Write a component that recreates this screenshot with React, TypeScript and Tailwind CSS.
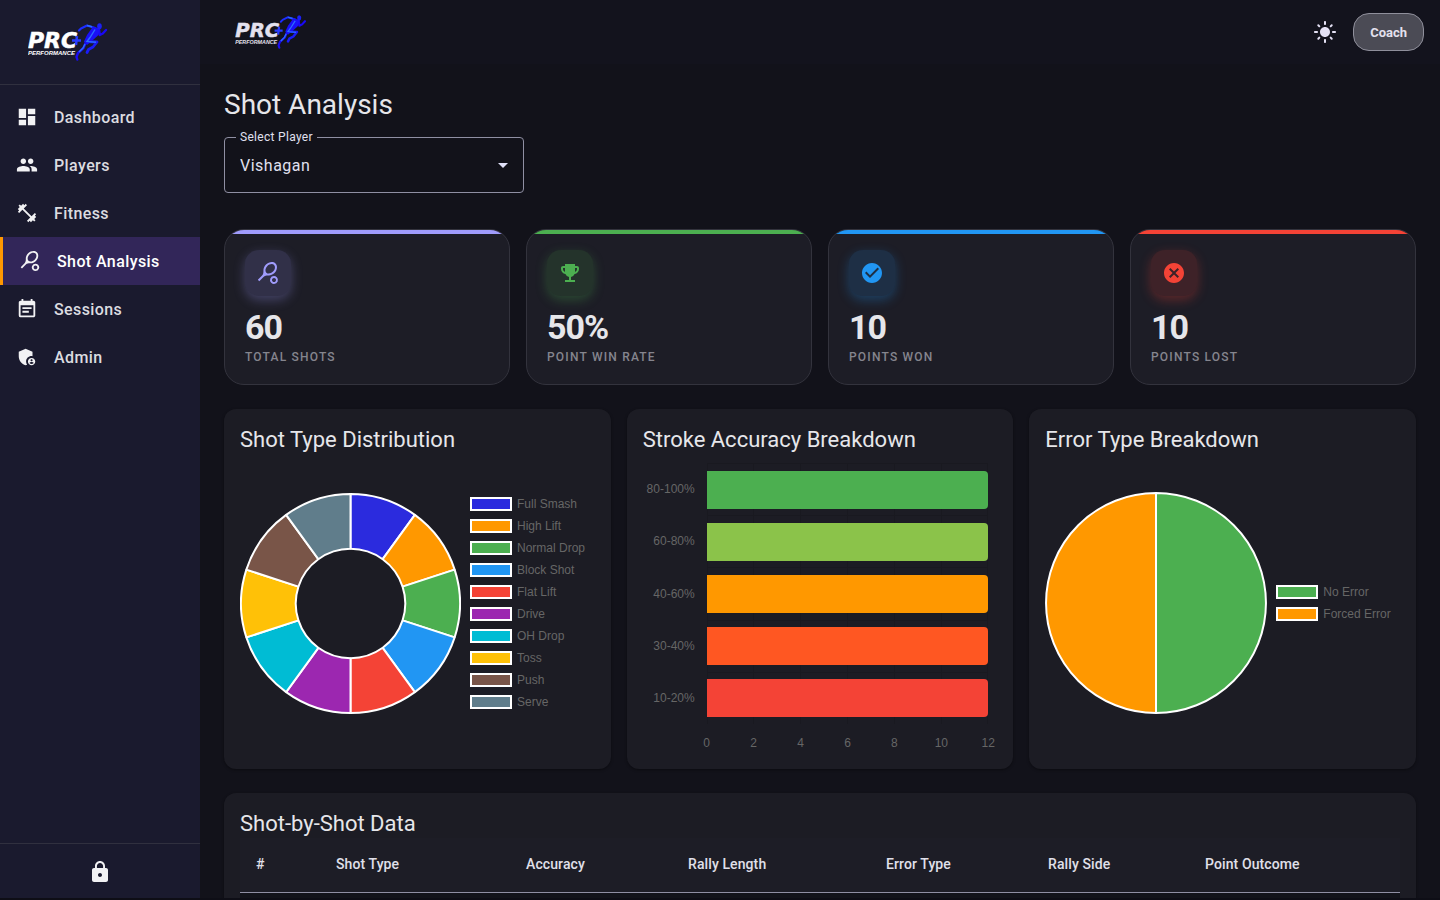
import React, { useState } from 'react';
import type { IconType } from 'react-icons';
import {
  MdAdminPanelSettings,
  MdArrowDropDown,
  MdCancel,
  MdCheckCircle,
  MdDashboard,
  MdEmojiEvents,
  MdEventNote,
  MdFitnessCenter,
  MdLightMode,
  MdLock,
  MdPeople,
  MdSportsTennis,
} from 'react-icons/md';

interface NavItem {
  label: string;
  icon: IconType;
}

interface Slice {
  label: string;
  value: number;
  color: string;
}

const navItems: NavItem[] = [
  { label: 'Dashboard', icon: MdDashboard },
  { label: 'Players', icon: MdPeople },
  { label: 'Fitness', icon: MdFitnessCenter },
  { label: 'Shot Analysis', icon: MdSportsTennis },
  { label: 'Sessions', icon: MdEventNote },
  { label: 'Admin', icon: MdAdminPanelSettings },
];

const stats = [
  {
    value: '60',
    label: 'Total Shots',
    icon: MdSportsTennis,
    bar: 'bg-[#a09cfc]',
    chip: 'bg-[#313048] text-[#a09cfc] shadow-[0_4px_12px_rgba(160,156,252,0.3)]',
  },
  {
    value: '50%',
    label: 'Point Win Rate',
    icon: MdEmojiEvents,
    bar: 'bg-[#4caf50]',
    chip: 'bg-[#24332b] text-[#4caf50] shadow-[0_4px_12px_rgba(76,175,80,0.3)]',
  },
  {
    value: '10',
    label: 'Points Won',
    icon: MdCheckCircle,
    bar: 'bg-[#2196f3]',
    chip: 'bg-[#1e2f45] text-[#2196f3] shadow-[0_4px_12px_rgba(33,150,243,0.3)]',
  },
  {
    value: '10',
    label: 'Points Lost',
    icon: MdCancel,
    bar: 'bg-[#f44336]',
    chip: 'bg-[#3e2228] text-[#f44336] shadow-[0_4px_12px_rgba(244,67,54,0.3)]',
  },
];

const shotTypes: Slice[] = [
  { label: 'Full Smash', value: 6, color: '#2b2bde' },
  { label: 'High Lift', value: 6, color: '#ff9800' },
  { label: 'Normal Drop', value: 6, color: '#4caf50' },
  { label: 'Block Shot', value: 6, color: '#2196f3' },
  { label: 'Flat Lift', value: 6, color: '#f44336' },
  { label: 'Drive', value: 6, color: '#9c27b0' },
  { label: 'OH Drop', value: 6, color: '#00bcd4' },
  { label: 'Toss', value: 6, color: '#ffc107' },
  { label: 'Push', value: 6, color: '#795548' },
  { label: 'Serve', value: 6, color: '#607d8b' },
];

const errorTypes: Slice[] = [
  { label: 'No Error', value: 30, color: '#4caf50' },
  { label: 'Forced Error', value: 30, color: '#ff9800' },
];

const accuracy: Slice[] = [
  { label: '80-100%', value: 12, color: '#4caf50' },
  { label: '60-80%', value: 12, color: '#8bc34a' },
  { label: '40-60%', value: 12, color: '#ff9800' },
  { label: '30-40%', value: 12, color: '#ff5722' },
  { label: '10-20%', value: 12, color: '#f44336' },
];

const ticks = [0, 2, 4, 6, 8, 10, 12];

const columns = [
  { label: '#', width: 'w-[80px]' },
  { label: 'Shot Type', width: 'w-[190px]' },
  { label: 'Accuracy', width: 'w-[162px]' },
  { label: 'Rally Length', width: 'w-[198px]' },
  { label: 'Error Type', width: 'w-[162px]' },
  { label: 'Rally Side', width: 'w-[157px]' },
  { label: 'Point Outcome', width: 'w-[211px]' },
];

const Logo: React.FC<{ className: string }> = ({ className }) => (
  <svg className={className} viewBox="0 0 80 38" role="img" aria-label="PRC+ Performance">
    <text fontWeight="700" fontStyle="italic" fill="currentColor">
      <tspan
        x="0"
        y="25"
        fontSize="22"
        stroke="currentColor"
        strokeWidth="0.5"
        className="font-['DejaVu_Sans',sans-serif]"
      >
        PRC
      </tspan>
      <tspan x="0" y="32" fontSize="6" className="font-['Liberation_Sans',Arial,sans-serif]">
        PERFORMANCE
      </tspan>
    </text>
    {/* plus */}
    <path d="M44 17.500h9M49 13l-1 9" stroke="#2a3cff" strokeWidth="2.500" fill="none" />
    {/* runner */}
    <g fill="none" strokeLinecap="round" strokeLinejoin="round">
      <path d="M67 5l-8-2.500-6 3-2 2" stroke="#1c2cff" strokeWidth="2.200" />
      <path d="M71 6.500l.8 5.500 3-1.500 3.200-3.500" stroke="#1a08f5" strokeWidth="2.400" />
      <path d="M58 18.500l11 .5-4 5-4.500 2.500-1.500 3" stroke="#1a1cf8" strokeWidth="2.800" />
      <path d="M58 19l-2.500 6-5.500 5-1.500 4 .8 2.500" stroke="#1a0cf2" strokeWidth="2.400" />
    </g>
    <path d="M65 3.500l7 2-1.500 6.500-5.500 5-6 5-3-3.500 3-6.500z" fill="#1a10f6" />
    <path
      d="M67 6.500l-5 8-3 4 9 .8M57 21l-2 4-4 4M64 3.800l-5-1.300"
      stroke="#2b6dff"
      strokeWidth="1.400"
      fill="none"
    />
    <ellipse cx="71.500" cy="3.200" rx="2.300" ry="3" fill="#1b20f5" />
  </svg>
);

const Legend: React.FC<{ items: Slice[] }> = ({ items }) => (
  <ul className="flex flex-col gap-2">
    {items.map((item) => (
      <li key={item.label} className="flex items-center gap-[5px] h-[14px]">
        <span
          className="w-[42px] h-[14px] border-2 border-white"
          style={{ backgroundColor: item.color }}
        />
        <span className="text-xs leading-[14px] text-[#666666] whitespace-nowrap font-['Liberation_Sans',Arial,sans-serif]">
          {item.label}
        </span>
      </li>
    ))}
  </ul>
);

const RADIUS = 110;

const slicePath = (start: number, end: number, inner: number) => {
  const point = (r: number, t: number) => {
    const a = t * Math.PI * 2 - Math.PI / 2;
    return `${(r * Math.cos(a)).toFixed(2)} ${(r * Math.sin(a)).toFixed(2)}`;
  };
  const large = end - start > 0.5 ? 1 : 0;
  if (inner === 0) {
    return `M0 0L${point(RADIUS, start)}A${RADIUS} ${RADIUS} 0 ${large} 1 ${point(RADIUS, end)}Z`;
  }
  return [
    `M${point(RADIUS, start)}`,
    `A${RADIUS} ${RADIUS} 0 ${large} 1 ${point(RADIUS, end)}`,
    `L${point(inner, end)}`,
    `A${inner} ${inner} 0 ${large} 0 ${point(inner, start)}Z`,
  ].join('');
};

interface RoundChartProps {
  items: Slice[];
  inner: number;
  title: string;
  size: string;
}

const RoundChart: React.FC<RoundChartProps> = ({ items, inner, title, size }) => {
  const total = items.reduce((sum, item) => sum + item.value, 0);
  let offset = 0;

  return (
    <div className="flex items-center gap-[9px] h-[298px] mb-px">
      <svg
        className={`${size} shrink-0`}
        viewBox="-111 -111 222 222"
        role="img"
        aria-label={title}
      >
        {items.map((item) => {
          const start = offset / total;
          offset += item.value;
          return (
            <path
              key={item.label}
              d={slicePath(start, offset / total, inner)}
              fill={item.color}
              stroke="#ffffff"
              strokeWidth="2"
              strokeLinejoin="bevel"
            />
          );
        })}
      </svg>
      <Legend items={items} />
    </div>
  );
};

const BarChart: React.FC = () => (
  <div className="flex flex-col h-[299px] pt-[9px] pr-[9px] text-xs text-[#666666] font-['Liberation_Sans',Arial,sans-serif]">
    <div className="flex h-[261px]">
      <div className="flex flex-col w-[52px] text-right">
        {accuracy.map((row) => (
          <div key={row.label} className="flex-1 flex items-center justify-end whitespace-nowrap">
            {row.label}
          </div>
        ))}
      </div>
      <div className="relative flex-1 flex flex-col ml-3">
        {/* grid lines */}
        <div className="absolute inset-0 grid grid-cols-6 border-r border-[#191920]">
          {ticks.slice(1).map((tick) => (
            <div key={tick} className="border-l border-[#191920]" />
          ))}
        </div>
        {accuracy.map((row) => (
          <div key={row.label} className="relative flex-1 flex items-center border-t border-[#191920]">
            <div
              className="h-[38px] rounded-r"
              style={{ width: `${(row.value / 12) * 100}%`, backgroundColor: row.color }}
            />
          </div>
        ))}
      </div>
    </div>
    <div className="flex justify-between ml-16 pt-[11px]">
      {ticks.map((tick) => (
        <span key={tick} className="w-0 flex justify-center leading-4">
          {tick}
        </span>
      ))}
    </div>
  </div>
);

const Panel: React.FC<{ title: string; children: React.ReactNode }> = ({ title, children }) => (
  <section className="min-w-0 px-4 pt-[17px] pb-4 rounded-xl bg-[#1c1c24] shadow-[0_1px_3px_rgba(0,0,0,0.4)]">
    <h2 className="text-[22px] leading-7">{title}</h2>
    {children}
  </section>
);

const Sidebar: React.FC<{ active: string; onSelect: (label: string) => void }> = ({
  active,
  onSelect,
}) => (
  <aside className="w-[200px] shrink-0 flex flex-col bg-[#1a1a2e]">
    <div className="h-[85px] pl-7 flex items-center border-b border-[#30303f]">
      <Logo className="w-20 h-[38px] text-white" />
    </div>
    <nav className="flex-1 py-2">
      {navItems.map(({ label, icon: Icon }) => (
        <a
          key={label}
          href="#"
          onClick={() => onSelect(label)}
          aria-current={label === active ? 'page' : undefined}
          className={`flex items-center gap-4 h-12 pl-4 font-medium tracking-wide ${
            label === active
              ? 'border-l-3 border-[#ff9800] bg-[#322659] text-white'
              : 'text-[#dcdce0]'
          }`}
        >
          <Icon className="size-[22px] text-[#f2f2f4]" />
          <span className="pt-[2px]">{label}</span>
        </a>
      ))}
    </nav>
    <div className="h-[55px] pt-px flex items-center justify-center border-t border-[#30303f]">
      <button type="button" aria-label="Lock" className="p-2 text-[#f2f2f4]">
        <MdLock className="size-6" />
      </button>
    </div>
  </aside>
);

export default function App() {
  const [active, setActive] = useState('Shot Analysis');
  const [player, setPlayer] = useState('Vishagan');

  return (
    <div className="flex h-screen overflow-hidden border-b-2 border-[#0e0e16] bg-[#12121a] text-[#e6e6ea] font-[Roboto,sans-serif]">
      <Sidebar active={active} onSelect={setActive} />

      <div className="flex-1 min-w-0 flex flex-col">
        <header className="h-16 shrink-0 flex items-center justify-between pl-[35px] pr-4 bg-[#13131d]">
          <Logo className="w-18 h-[34px] text-[#e4e1ee]" />
          <div className="flex items-center gap-2">
            <button
              type="button"
              aria-label="Toggle theme"
              className="size-10 flex items-center justify-center text-[#e4e1f4]"
            >
              <MdLightMode className="size-6" />
            </button>
            <button
              type="button"
              className="h-[38px] px-4 pt-px rounded-2xl border border-[#8f8f9b] bg-[#4b4b55] text-[13px] font-bold text-[#e4e1ee]"
            >
              Coach
            </button>
          </div>
        </header>

        <main className="flex-1 min-h-0 overflow-hidden px-6 pt-[25px]">
          <h1 className="text-[28px] leading-8">Shot Analysis</h1>

          <fieldset className="relative w-[300px] mt-[9px] px-[11px] pb-[5px] rounded border border-[#8f8fa3]">
            <legend className="px-1 text-xs leading-[15px] tracking-wide text-[#e0e0f0]">
              <label htmlFor="player">Select Player</label>
            </legend>
            <select
              id="player"
              value={player}
              onChange={(e) => setPlayer(e.target.value)}
              className="block w-full h-[42px] px-1 appearance-none bg-transparent tracking-[0.5px] text-[#e0e0f0] focus:outline-none"
            >
              <option value="Vishagan">Vishagan</option>
            </select>
            <MdArrowDropDown className="absolute right-2 top-2 size-6 pointer-events-none text-[#e0e0f8]" />
          </fieldset>

          {/* summary cards */}
          <div className="grid grid-cols-4 gap-4 mt-9">
            {stats.map(({ value, label, icon: Icon, bar, chip }) => (
              <div
                key={label}
                className="flex flex-col overflow-hidden rounded-[20px] border border-[#33333d] bg-[#1d1d26]"
              >
                <div className={`h-1 ${bar}`} />
                <div className="px-5 pt-4 pb-[19px]">
                  <div className={`size-[46px] flex items-center justify-center rounded-[14px] ${chip}`}>
                    <Icon className="size-6" />
                  </div>
                  <div className="mt-[13px] text-[34px] leading-9 font-bold tracking-[-1px]">{value}</div>
                  <div className="mt-1 text-xs leading-4 font-medium uppercase tracking-[1.2px] text-[#85858e]">
                    {label}
                  </div>
                </div>
              </div>
            ))}
          </div>

          {/* charts */}
          <div className="grid grid-cols-3 gap-4 mt-6">
            <Panel title="Shot Type Distribution">
              <RoundChart
                items={shotTypes}
                inner={55}
                title="Shot Type Distribution"
                size="size-[221px]"
              />
            </Panel>
            <Panel title="Stroke Accuracy Breakdown">
              <BarChart />
            </Panel>
            <Panel title="Error Type Breakdown">
              <RoundChart
                items={errorTypes}
                inner={0}
                title="Error Type Breakdown"
                size="size-[222px]"
              />
            </Panel>
          </div>

          <div className="mt-6">
            <Panel title="Shot-by-Shot Data">
              <table className="w-full table-fixed text-sm text-left bg-[#12131a]">
                <thead>
                  <tr className="h-[54px] border-b border-[#8f8fa3] bg-[#1d1d26] text-[#e0e0ea]">
                    {columns.map(({ label, width }) => (
                      <th
                        key={label}
                        scope="col"
                        className={`${width} px-4 pb-[2px] font-medium tracking-[0.1px]`}
                      >
                        {label}
                      </th>
                    ))}
                  </tr>
                </thead>
                <tbody>
                  <tr className="h-[52px]">
                    <td colSpan={columns.length} />
                  </tr>
                </tbody>
              </table>
            </Panel>
          </div>
        </main>
      </div>
    </div>
  );
}
